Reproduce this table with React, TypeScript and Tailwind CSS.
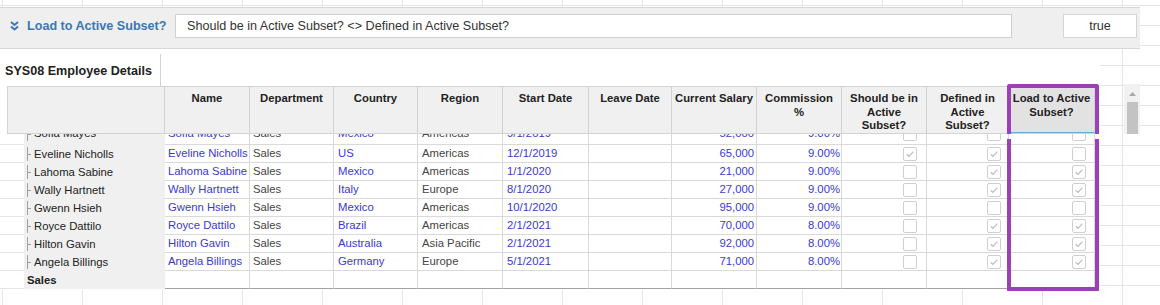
import React from 'react';

type Row = {
  label: string;
  name: string;
  dept: string;
  country: string;
  region: string;
  start: string;
  salary: string;
  commission: string;
  should: boolean;
  defined: boolean;
  load: boolean;
};

const rows: Row[] = [
  { label: 'Sofia Mayes', name: 'Sofia Mayes', dept: 'Sales', country: 'Mexico', region: 'Americas', start: '9/1/2019', salary: '52,000', commission: '9.00%', should: false, defined: false, load: false },
  { label: 'Eveline Nicholls', name: 'Eveline Nicholls', dept: 'Sales', country: 'US', region: 'Americas', start: '12/1/2019', salary: '65,000', commission: '9.00%', should: true, defined: true, load: false },
  { label: 'Lahoma Sabine', name: 'Lahoma Sabine', dept: 'Sales', country: 'Mexico', region: 'Americas', start: '1/1/2020', salary: '21,000', commission: '9.00%', should: false, defined: true, load: true },
  { label: 'Wally Hartnett', name: 'Wally Hartnett', dept: 'Sales', country: 'Italy', region: 'Europe', start: '8/1/2020', salary: '27,000', commission: '9.00%', should: false, defined: true, load: true },
  { label: 'Gwenn Hsieh', name: 'Gwenn Hsieh', dept: 'Sales', country: 'Mexico', region: 'Americas', start: '10/1/2020', salary: '95,000', commission: '9.00%', should: false, defined: false, load: false },
  { label: 'Royce Dattilo', name: 'Royce Dattilo', dept: 'Sales', country: 'Brazil', region: 'Americas', start: '2/1/2021', salary: '70,000', commission: '8.00%', should: false, defined: true, load: true },
  { label: 'Hilton Gavin', name: 'Hilton Gavin', dept: 'Sales', country: 'Australia', region: 'Asia Pacific', start: '2/1/2021', salary: '92,000', commission: '8.00%', should: false, defined: true, load: true },
  { label: 'Angela Billings', name: 'Angela Billings', dept: 'Sales', country: 'Germany', region: 'Europe', start: '5/1/2021', salary: '71,000', commission: '8.00%', should: false, defined: true, load: true },
];

const Checkbox = ({ checked }: { checked: boolean }) => (
  <div className="flex h-[14px] w-[14px] items-center justify-center rounded-[2px] border border-[#cfcfcf] bg-white">
    {checked && (
      <svg width="10" height="10" viewBox="0 0 10 10">
        <path d="M1.8 5.2 L4 7.3 L8.3 2.6" fill="none" stroke="#bdbdbd" strokeWidth="1.2" />
      </svg>
    )}
  </div>
);

const cell = 'shrink-0 h-full overflow-hidden whitespace-nowrap border-r border-b border-[#d9d9d9] flex leading-[13px]';

const DataRow = ({ row, last, partial }: { row?: Row; last?: boolean; partial?: boolean }) => {
  // the row cut by the header sits with its text at the top of the cell
  const b = `${last ? 'border-b-[#a3a3a3]' : ''} ${partial ? 'items-start' : 'items-center'}`;
  return (
    <div className="flex h-[18px]">
      <div className="w-[24px] shrink-0 border-b border-[#e4e4e4] bg-white" />
      <div className={`flex h-full w-[141px] shrink-0 bg-[#f0f0f0] leading-[13px] ${partial ? 'items-start' : 'items-center'}`}>
        {row ? (
          <>
            <div className="ml-[3px] flex h-[14px] items-center border-l border-[#a0a0a0]">
              <div className="h-px w-[3px] bg-[#a0a0a0]" />
            </div>
            <span className="ml-[3px] text-[#222]">{row.label}</span>
          </>
        ) : (
          <span className="ml-[3px] font-bold text-[#222]">Sales</span>
        )}
      </div>
      <div className={`${cell} ${b} w-[85px] pl-[3px] text-[#3939cf]`}>{row?.name}</div>
      <div className={`${cell} ${b} w-[84px] pl-[3px] text-[#444]`}>{row?.dept}</div>
      <div className={`${cell} ${b} w-[84px] pl-[4px] text-[#3939cf]`}>{row?.country}</div>
      <div className={`${cell} ${b} w-[85px] pl-[4px] text-[#444]`}>{row?.region}</div>
      <div className={`${cell} ${b} w-[86px] pl-[4px] text-[#3939cf]`}>{row?.start}</div>
      <div className={`${cell} ${b} w-[83px]`} />
      <div className={`${cell} ${b} w-[85px] justify-end pr-[2px] text-[#3939cf]`}>{row?.salary}</div>
      <div className={`${cell} ${b} w-[85px] justify-end pr-[1px] text-[#3939cf]`}>{row?.commission}</div>
      <div className={`${cell} ${b} w-[85px] justify-end pr-[9px]`}>{row && <Checkbox checked={row.should} />}</div>
      <div className={`${cell} ${b} w-[82px] justify-end pr-[7px]`}>{row && <Checkbox checked={row.defined} />}</div>
      <div className={`${cell} ${b} w-[86px] justify-end pr-[8px]`}>{row && <Checkbox checked={row.load} />}</div>
    </div>
  );
};

const headCell = 'shrink-0 h-full border-r border-[#d3d3d3] pt-[5px] text-center font-bold leading-[13.5px] text-[#222]';

export default function App() {
  return (
    <div className="relative h-[305px] w-[1160px] overflow-hidden bg-white bg-[linear-gradient(to_right,#e4e4e4_1px,transparent_1px),linear-gradient(to_bottom,#e4e4e4_1px,transparent_1px)] bg-[length:80px_20px] bg-[position:2px_5px] font-['Liberation_Sans',Arial,sans-serif] text-[#333]">
      {/* filter strip */}
      <div className="mt-[7px] flex h-[42px] w-[1140px] items-start border-y border-[#d6d6d6] bg-[#efefef] pt-[6px]">
        <div className="flex h-[24px] w-[175px] shrink-0 items-center">
          <svg className="ml-[10px]" width="9" height="10" viewBox="0 0 9 10">
            <path d="M1 1 L4.5 4 L8 1 M1 5.5 L4.5 8.5 L8 5.5" fill="none" stroke="#3a78b5" strokeWidth="2" />
          </svg>
          <span className="ml-[8px] text-[12.6px] font-bold text-[#3a78b5]">Load to Active Subset?</span>
        </div>
        <div className="flex h-[24px] w-[837px] shrink-0 items-center border border-[#cfcfcf] bg-white pl-[11px] text-[12.6px] text-[#333]">
          Should be in Active Subset? &lt;&gt; Defined in Active Subset?
        </div>
        <div className="ml-[51px] flex h-[24px] w-[74px] shrink-0 items-center justify-center border border-[#d6d6d6] bg-white text-[12.6px] text-[#333]">
          true
        </div>
      </div>

      {/* report panel */}
      <div className="w-[1100px] bg-white">
        <div className="flex h-[37px] items-end">
          <div className="flex h-[32px] w-[161px] items-center border-r border-[#d3d3d3] pl-[5px] pt-[2px] text-[12.6px] font-bold text-[#222]">
            SYS08 Employee Details
          </div>
        </div>

        <div className="relative text-[11.3px]">
          {/* header */}
          <div className="flex h-[48px]">
            <div className="ml-[7px] flex h-full border-y border-l border-[#d3d3d3] bg-[#f0f0f0]">
              <div className={`${headCell} w-[157px]`} />
              <div className={`${headCell} w-[85px]`}>Name</div>
              <div className={`${headCell} w-[84px]`}>Department</div>
              <div className={`${headCell} w-[84px]`}>Country</div>
              <div className={`${headCell} w-[85px]`}>Region</div>
              <div className={`${headCell} w-[86px]`}>Start Date</div>
              <div className={`${headCell} w-[83px]`}>Leave Date</div>
              <div className={`${headCell} w-[85px]`}>Current Salary</div>
              <div className={`${headCell} w-[85px]`}>Commission<br />%</div>
              <div className={`${headCell} w-[85px]`}>Should be in<br />Active<br />Subset?</div>
              <div className={`${headCell} w-[82px]`}>Defined in<br />Active<br />Subset?</div>
              <div className={`${headCell} w-[86px] border-b border-b-[#62aedb] bg-[#e2e2e2]`}>Load to Active<br />Subset?</div>
            </div>
          </div>

          {/* body, scrolled a little */}
          <div className="h-[156px] overflow-hidden">
            <div className="-mt-[7px]">
              {rows.map((r, i) => (
                <DataRow key={r.label} row={r} partial={i === 0} />
              ))}
              <DataRow last />
            </div>
          </div>

          {/* selected column highlight */}
          <div className="absolute left-[1007px] top-[-2px] h-[50px] w-[92px] rounded-t-[3px] border-4 border-b-0 border-[#9b41b6]" />
          <div className="absolute left-[1007px] top-[53px] h-[152px] w-[92px] border-4 border-t-0 border-[#9b41b6]" />
        </div>
      </div>

      {/* vertical scrollbar stub */}
      <div className="absolute left-[1124px] top-[84px] flex h-[50px] w-[16px] flex-col items-center bg-[#f1f1f1]">
        <svg className="mt-[8px]" width="7" height="4" viewBox="0 0 7 4">
          <path d="M0 4 L3.5 0 L7 4 Z" fill="#a8a8a8" />
        </svg>
        <div className="mt-[6px] h-[32px] w-[11px] bg-[#c3c3c3]" />
      </div>
    </div>
  );
}
